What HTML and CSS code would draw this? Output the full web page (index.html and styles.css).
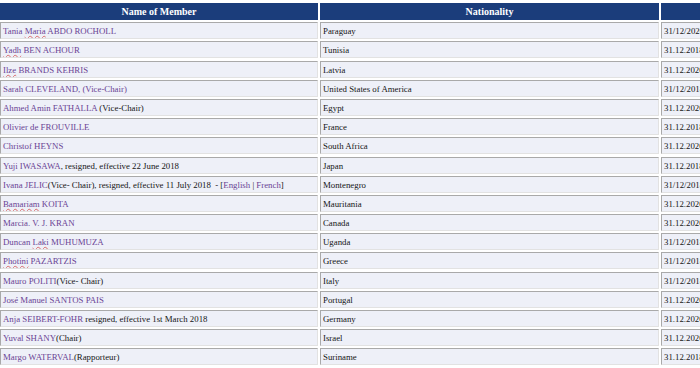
FILE: index.html
```html
<!DOCTYPE html>
<html>
<head>
<meta charset="utf-8">
<link rel="stylesheet" href="styles.css">
</head>
<body>
<div class="members">
  <div class="th">Name of Member</div>
  <div class="th">Nationality</div>
  <div class="th"></div>

  <div class="td"><a class="m" href="#">Tania <span class="sp">Maria</span> ABDO ROCHOLL</a></div>
  <div class="td">Paraguay</div>
  <div class="td">31/12/2020</div>

  <div class="td"><a class="m" href="#"><span class="sp">Yadh</span> BEN ACHOUR</a></div>
  <div class="td">Tunisia</div>
  <div class="td">31.12.2018</div>

  <div class="td"><a class="m" href="#"><span class="sp">Ilze</span> BRANDS KEHRIS</a></div>
  <div class="td">Latvia</div>
  <div class="td">31.12.2020</div>

  <div class="td"><a class="m" href="#">Sarah CLEVELAND, (Vice-Chair)</a></div>
  <div class="td">United States of America</div>
  <div class="td">31/12/2018</div>

  <div class="td"><a class="m" href="#">Ahmed Amin FATHALLA</a> (Vice-Chair)</div>
  <div class="td">Egypt</div>
  <div class="td">31.12.2020</div>

  <div class="td"><a class="m" href="#">Olivier de FROUVILLE</a></div>
  <div class="td">France</div>
  <div class="td">31.12.2018</div>

  <div class="td"><a class="m" href="#">Christof HEYNS</a></div>
  <div class="td">South Africa</div>
  <div class="td">31.12.2020</div>

  <div class="td"><a class="m" href="#">Yuji IWASAWA</a>, resigned, effective 22 June 2018</div>
  <div class="td">Japan</div>
  <div class="td">31.12.2018</div>

  <div class="td"><a class="m" href="#">Ivana JELIC</a>(Vice- Chair), resigned, effective 11 July 2018&nbsp; - [<a class="m" href="#">English</a> | <a class="m" href="#">French</a>]</div>
  <div class="td">Montenegro</div>
  <div class="td">31/12/2018</div>

  <div class="td"><a class="m" href="#"><span class="sp">Bamariam</span> KOITA</a></div>
  <div class="td">Mauritania</div>
  <div class="td">31.12.2020</div>

  <div class="td"><a class="m" href="#">Marcia. V. J. KRAN</a></div>
  <div class="td">Canada</div>
  <div class="td">31.12.2020</div>

  <div class="td"><a class="m" href="#">Duncan <span class="sp">Laki</span> MUHUMUZA</a></div>
  <div class="td">Uganda</div>
  <div class="td">31/12/2018</div>

  <div class="td"><a class="m" href="#"><span class="sp">Photini</span> PAZARTZIS</a></div>
  <div class="td">Greece</div>
  <div class="td">31/12/2018</div>

  <div class="td"><a class="m" href="#">Mauro POLITI</a>(Vice- Chair)</div>
  <div class="td">Italy</div>
  <div class="td">31/12/2018</div>

  <div class="td"><a class="m" href="#">José Manuel SANTOS PAIS</a></div>
  <div class="td">Portugal</div>
  <div class="td">31.12.2020</div>

  <div class="td"><a class="m" href="#">Anja SEIBERT-FOHR</a> resigned, effective 1st March 2018</div>
  <div class="td">Germany</div>
  <div class="td">31.12.2020</div>

  <div class="td"><a class="m" href="#">Yuval SHANY</a>(Chair)</div>
  <div class="td">Israel</div>
  <div class="td">31.12.2020</div>

  <div class="td"><a class="m" href="#">Margo WATERVAL</a>(Rapporteur)</div>
  <div class="td">Suriname</div>
  <div class="td">31.12.2018</div>
</div>
</body>
</html>
```
FILE: styles.css
```css
html, body {
  margin: 0;
  padding: 0;
  overflow: hidden;
  background: #ffffff;
}

body {
  font-family: "Liberation Serif", "Times New Roman", serif;
}

.members {
  display: grid;
  grid-template-columns: 318px 339px 120px;
  grid-auto-rows: 17px;
  column-gap: 2px;
  row-gap: 2.2px;
  padding-top: 3px;
  width: 800px;
}

.th {
  background: #1b3d7b;
  color: #ffffff;
  font-weight: bold;
  font-size: 10px;
  line-height: 17px;
  text-align: center;
  white-space: nowrap;
}

.td {
  background: #eef0f8;
  border: 1px solid;
  border-color: #a9a9a9 #e2e2e2 #e2e2e2 #a9a9a9;
  font-size: 8.8px;
  line-height: 16px;
  padding-left: 2px;
  color: #151515;
  white-space: nowrap;
  overflow: hidden;
}

.m {
  color: #6a4394;
  text-decoration: none;
}

.sp {
  text-decoration: underline wavy #d86a6a;
  text-decoration-thickness: 1px;
  text-underline-offset: 1px;
}
```
